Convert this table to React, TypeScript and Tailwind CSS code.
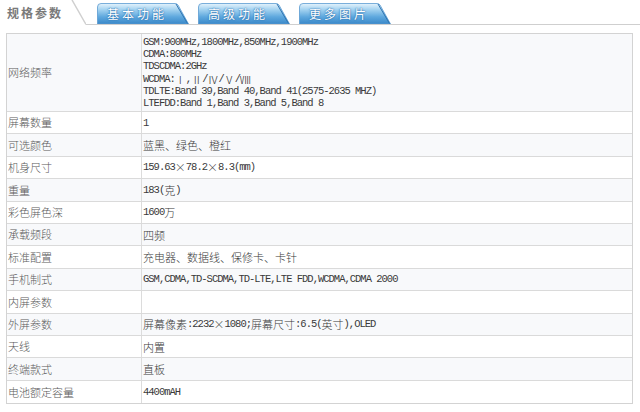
import React from "react";

type Row = [string, string[]];

const rows: Row[] = [
  [
    "网络频率",
    [
      "GSM:900MHz,1800MHz,850MHz,1900MHz",
      "CDMA:800MHz",
      "TDSCDMA:2GHz",
      "WCDMA:Ⅰ,Ⅱ/Ⅳ/Ⅴ/Ⅷ",
      "TDLTE:Band 39,Band 40,Band 41(2575-2635 MHZ)",
      "LTEFDD:Band 1,Band 3,Band 5,Band 8",
    ],
  ],
  ["屏幕数量", ["1"]],
  ["可选颜色", ["蓝黑、绿色、橙红"]],
  ["机身尺寸", ["159.63×78.2×8.3(mm)"]],
  ["重量", ["183(克)"]],
  ["彩色屏色深", ["1600万"]],
  ["承载频段", ["四频"]],
  ["标准配置", ["充电器、数据线、保修卡、卡针"]],
  ["手机制式", ["GSM,CDMA,TD-SCDMA,TD-LTE,LTE FDD,WCDMA,CDMA 2000"]],
  ["内屏参数", [""]],
  ["外屏参数", ["屏幕像素:2232×1080;屏幕尺寸:6.5(英寸),OLED"]],
  ["天线", ["内置"]],
  ["终端款式", ["直板"]],
  ["电池额定容量", ["4400mAH"]],
];

const tabs = ["基本功能", "高级功能", "更多图片"];

const isCjk = (c: string) => /[\u2160-\u217f\u3000-\u303f\u4e00-\u9fff\uff00-\uffef]/.test(c);

// split a line into cjk / latin / × runs so each gets its own width
function Mixed({ s }: { s: string }) {
  const runs: { k: string; t: string }[] = [];
  for (const ch of s) {
    const k = ch === "×" ? "x" : isCjk(ch) ? "c" : "l";
    const last = runs[runs.length - 1];
    if (last && last.k === k && k !== "x") last.t += ch;
    else runs.push({ k, t: ch });
  }
  return (
    <>
      {runs.map((r, i) =>
        r.k === "c" ? (
          <span key={i}>{r.t}</span>
        ) : r.k === "x" ? (
          <span key={i} className="inline-block w-[11px] text-center">×</span>
        ) : (
          <span key={i} className="font-['Liberation_Mono',monospace] text-[10.5px] tracking-[-1px]">{r.t}</span>
        )
      )}
    </>
  );
}

function Tab({ label, i }: { label: string; i: number }) {
  return (
    <div className="relative flex h-[21px] w-[92px] items-center pl-[10px]">
      <svg className="absolute inset-0" width="92" height="21" viewBox="0 0 92 21">
        <defs>
          <linearGradient id={`tg${i}`} x1="0" y1="0" x2="0" y2="1">
            <stop offset="0" stopColor="#e4f3fc" />
            <stop offset="0.3" stopColor="#a3d2f0" />
            <stop offset="0.65" stopColor="#5ea8de" />
            <stop offset="1" stopColor="#3a88c8" />
          </linearGradient>
        </defs>
        <path d="M0.5 21 L0.5 4 Q0.5 0.5 4 0.5 L78 0.5 Q80 0.5 81 2 L91.5 21 Z" fill={`url(#tg${i})`} stroke="#5b9bd0" strokeWidth="0.8" />
        <path d="M79 1 L90.5 20.5" stroke="#2f74b0" strokeWidth="1" />
      </svg>
      <span className="relative text-[12px] leading-none tracking-[3px] text-white [text-shadow:0_0_2px_#2a6fae,0_0_1px_#2a6fae]">
        {label}
      </span>
    </div>
  );
}

export default function App() {
  return (
    <div className="h-[412px] w-[640px] overflow-hidden bg-white font-['Noto_Sans_CJK_SC',sans-serif]">
      <div className="flex h-[25px]">
        <div className="relative w-[86px] shrink-0">
          <div className="pl-[7px] pt-[7px] text-[12px] leading-none font-bold tracking-[2px] text-[#7a7a7a]">规格参数</div>
          <svg className="absolute left-0 top-0" width="86" height="25" viewBox="0 0 86 25">
            <path d="M72 0 L84 21 L86 24.5" fill="none" stroke="#cfcfcf" strokeWidth="1.5" />
          </svg>
        </div>
        <div className="flex flex-1 items-end gap-[9px] border-b border-[#cfcfcf] pl-[11px]">
          {tabs.map((t, i) => (
            <Tab key={t} label={t} i={i} />
          ))}
        </div>
      </div>

      <div className="ml-[6px] mt-[8px] w-[627px] border border-[#d3d3d3]">
        {rows.map(([label, lines], idx) => (
          <div
            key={label}
            className={`flex ${idx === 0 ? "h-[78px]" : "h-[22.4px]"} ${idx % 2 === 0 ? "bg-[#f8f9fb]" : "bg-white"} ${idx === rows.length - 1 ? "" : "border-b border-[#dadada]"}`}
          >
            <div className="flex w-[135px] shrink-0 items-center border-r border-[#dcdcdc] pl-[1px] text-[11px] font-light text-[#5a5a5a]">
              {label}
            </div>
            <div className="flex flex-col justify-center pl-[1px] text-[11px] font-light text-[#3a3a3a]">
              {lines.map((l, j) => (
                <div key={j} className="flex h-[12.2px] items-center whitespace-nowrap leading-[12px]">
                  <Mixed s={l} />
                </div>
              ))}
            </div>
          </div>
        ))}
      </div>
    </div>
  );
}
